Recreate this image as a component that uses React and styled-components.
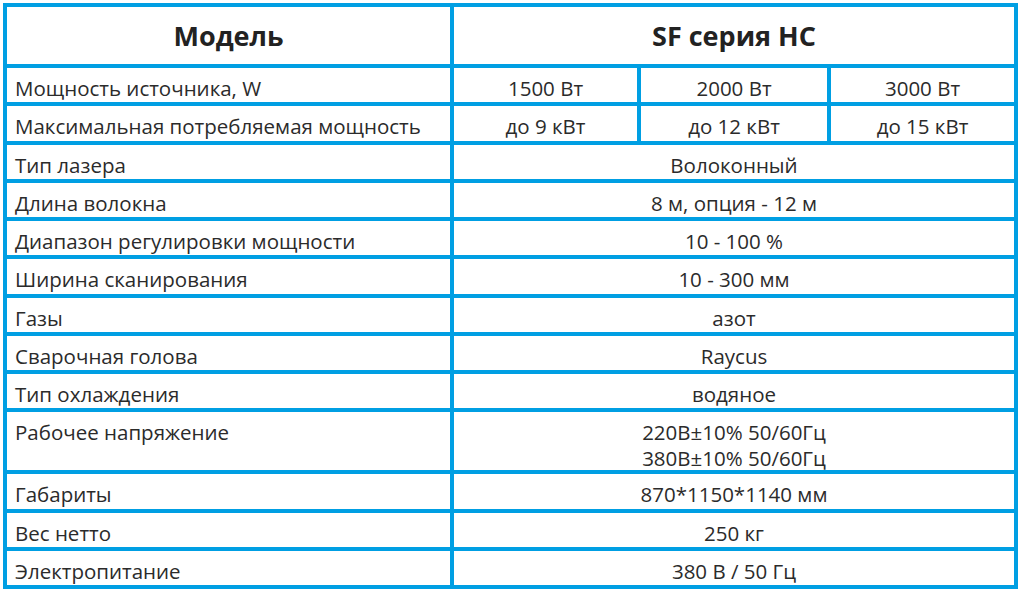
import React from 'react';
import styled, { createGlobalStyle } from 'styled-components';

const GlobalStyle = createGlobalStyle`
  html, body {
    margin: 0;
    padding: 0;
    background: #ffffff;
  }
  body {
    font-family: "Open Sans", "Liberation Sans", sans-serif;
    color: #2b2b2b;
  }
`;

const Page = styled.div`
  padding: 3px 0 0 3px;
  width: 1024px;
  height: 592px;
  box-sizing: border-box;
`;

const Grid = styled.div`
  display: grid;
  grid-template-columns: 443px 183px 186px 183px;
  grid-template-rows: 57px repeat(9, 34.25px) 58px repeat(3, 34.25px);
  gap: 4px;
  padding: 4px;
  width: fit-content;
  background: #009fe3;
`;

const HeaderCell = styled.div`
  grid-column: ${({ span }) => (span ? `span ${span}` : 'auto')};
  display: flex;
  align-items: center;
  justify-content: center;
  background: #ffffff;
  font-size: 27px;
  font-weight: 700;
  color: #222222;
`;

const LabelCell = styled.div`
  background: #ffffff;
  padding: 8px 0 0 8px;
  font-size: 20.5px;
  line-height: 24px;
  white-space: nowrap;
`;

const ValueCell = styled.div`
  grid-column: ${({ span }) => (span ? `span ${span}` : 'auto')};
  background: #ffffff;
  padding-top: 7px;
  font-size: 20.5px;
  line-height: 26px;
  text-align: center;
  white-space: nowrap;
`;

const rows = [
  { label: 'Мощность источника, W', values: ['1500 Вт', '2000 Вт', '3000 Вт'] },
  { label: 'Максимальная потребляемая мощность', values: ['до 9 кВт', 'до 12 кВт', 'до 15 кВт'] },
  { label: 'Тип лазера', value: 'Волоконный' },
  { label: 'Длина волокна', value: '8 м, опция - 12 м' },
  { label: 'Диапазон регулировки мощности', value: '10 - 100 %' },
  { label: 'Ширина сканирования', value: '10 - 300 мм' },
  { label: 'Газы', value: 'азот' },
  { label: 'Сварочная голова', value: 'Raycus' },
  { label: 'Тип охлаждения', value: 'водяное' },
  { label: 'Рабочее напряжение', value: ['220В±10% 50/60Гц', '380В±10% 50/60Гц'] },
  { label: 'Габариты', value: '870*1150*1140 мм' },
  { label: 'Вес нетто', value: '250 кг' },
  { label: 'Электропитание', value: '380 В / 50 Гц' },
];

export default function App() {
  return (
    <Page>
      <GlobalStyle />
      <Grid>
        <HeaderCell>Модель</HeaderCell>
        <HeaderCell span={3}>SF серия НС</HeaderCell>
        {rows.map((row) => (
          <React.Fragment key={row.label}>
            <LabelCell>{row.label}</LabelCell>
            {row.values
              ? row.values.map((v) => <ValueCell key={v}>{v}</ValueCell>)
              : (
                <ValueCell span={3}>
                  {Array.isArray(row.value)
                    ? row.value.map((line) => <div key={line}>{line}</div>)
                    : row.value}
                </ValueCell>
              )}
          </React.Fragment>
        ))}
      </Grid>
    </Page>
  );
}
